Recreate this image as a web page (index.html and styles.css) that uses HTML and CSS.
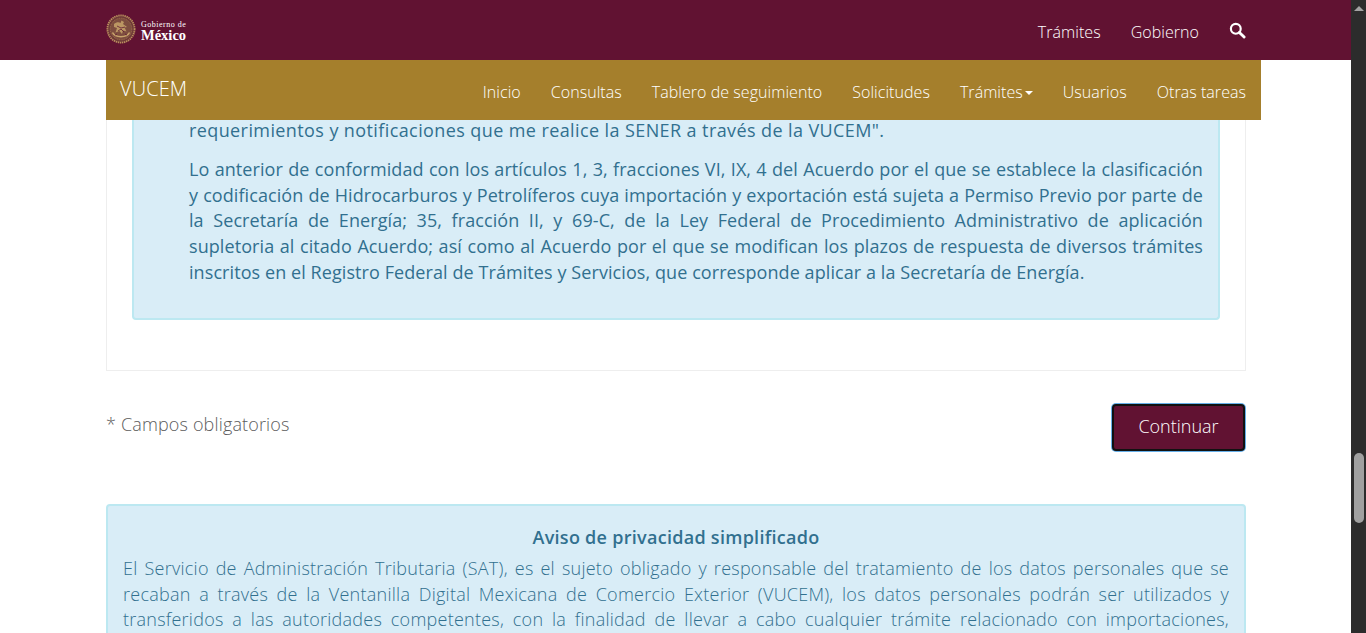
FILE: index.html
```html
<!DOCTYPE html>
<html lang="es">
<head>
<meta charset="utf-8">
<title>VUCEM</title>
<link rel="stylesheet" href="styles.css">
</head>
<body>
<div class="window">
  <div class="viewport">
    <header class="topbar">
      <div class="container topbar-row">
        <a class="logo" href="#">
          <svg class="seal" viewBox="0 0 30 30" width="30" height="30" aria-hidden="true">
            <circle cx="15" cy="15" r="13.6" fill="#6f3a38" stroke="#b98f5e" stroke-width="1.8" stroke-dasharray="1.4 0.7"/>
            <circle cx="15" cy="15" r="10.8" fill="#7d4d3f" stroke="#a98050" stroke-width="0.7" stroke-dasharray="1 0.8"/>
            <path d="M8 10c2-2 5-2.500 6.500-1l1-2.500 2.500 1.500-1 2 4 3-2.500.5 2 4-3.500-1-1 3.500-2.500-3-4 1.500 1.500-4.500-3-1z" fill="#bb9663"/>
            <path d="M6.500 18.500c2.500 5.500 14.500 5.500 17 0" fill="none" stroke="#c9a46c" stroke-width="1.500"/>
            <path d="M11 12l4 2 4-1M12 17l3-2 3 3M9 21l2-1M19 20l2 1" fill="none" stroke="#5f1a33" stroke-width="0.8"/>
          </svg>
          <span class="logo-text"><span class="logo-small">Gobierno de</span><span class="logo-big">México</span></span>
        </a>
        <nav class="toplinks">
          <a href="#">Trámites</a>
          <a href="#">Gobierno</a>
          <a href="#" class="search" aria-label="Buscar">
            <svg viewBox="0 0 18 18" width="17" height="17"><circle cx="7.2" cy="7.2" r="5.2" fill="none" stroke="#fff" stroke-width="2.3"/><path d="M11 11l5 5" stroke="#fff" stroke-width="3" stroke-linecap="round"/></svg>
          </a>
        </nav>
      </div>
    </header>
    <div class="container">
      <nav class="subnav">
        <a class="brand" href="#">VUCEM</a>
        <ul class="menu">
          <li><a href="#">Inicio</a></li>
          <li><a href="#">Consultas</a></li>
          <li><a href="#">Tablero de seguimiento</a></li>
          <li><a href="#">Solicitudes</a></li>
          <li><a href="#">Trámites<span class="caret"></span></a></li>
          <li><a href="#">Usuarios</a></li>
          <li><a href="#">Otras tareas</a></li>
        </ul>
      </nav>
      <section class="panel">
        <div class="alert alert-inner">
          <p>requerimientos y notificaciones que me realice la SENER a través de la VUCEM".</p>
          <p>Lo anterior de conformidad con los artículos 1, 3, fracciones VI, IX, 4 del Acuerdo por el que se establece la clasificación y codificación de Hidrocarburos y Petrolíferos cuya importación y exportación está sujeta a Permiso Previo por parte de la Secretaría de Energía; 35, fracción II, y 69-C, de la Ley Federal de Procedimiento Administrativo de aplicación supletoria al citado Acuerdo; así como al Acuerdo por el que se modifican los plazos de respuesta de diversos trámites inscritos en el Registro Federal de Trámites y Servicios, que corresponde aplicar a la Secretaría de Energía.</p>
        </div>
      </section>
      <div class="actions">
        <span class="required">* Campos obligatorios</span>
        <button class="btn" type="button">Continuar</button>
      </div>
      <section class="alert privacy">
        <h3>Aviso de privacidad simplificado</h3>
        <p>El Servicio de Administración Tributaria (SAT), es el sujeto obligado y responsable del tratamiento de los datos personales que se recaban a través de la Ventanilla Digital Mexicana de Comercio Exterior (VUCEM), los datos personales podrán ser utilizados y transferidos a las autoridades competentes, con la finalidad de llevar a cabo cualquier trámite relacionado con importaciones, exportaciones y demás operaciones de comercio exterior.</p>
      </section>
    </div>
  </div>
  <div class="scrollbar" aria-hidden="true">
    <span class="arrow"></span>
    <span class="thumb"></span>
  </div>
</div>
</body>
</html>
```

FILE: styles.css
```css
* { box-sizing: border-box; }
html, body { margin: 0; padding: 0; height: 633px; overflow: hidden; background: #fff; }
body { font-family: "Open Sans", "Noto Sans", sans-serif; font-size: 18px; line-height: 1.4286; color: #5c5c5c; }
a { color: inherit; text-decoration: none; }
.window { display: flex; height: 633px; }
.viewport { flex: 1; min-width: 0; height: 633px; overflow: hidden; }
.scrollbar { width: 15px; flex: none; background: #2c2c2c; display: flex; flex-direction: column; align-items: center; }
.arrow { margin-top: 6px; border-left: 5px solid transparent; border-right: 5px solid transparent; border-bottom: 5px solid #a3a3a3; }
.thumb { margin-top: 442px; width: 10px; height: 70px; border-radius: 5px; background: #a0a0a0; }
.container { width: 1140px; margin-left: 106px; }
.topbar { height: 60px; background: #611232; color: #fff; }
.topbar-row { display: flex; align-items: center; justify-content: space-between; height: 60px; }
.logo { display: flex; align-items: center; gap: 5px; margin-top: -2px; }
.seal { display: block; }
.logo-text { display: flex; flex-direction: column; padding-top: 3px; font-family: "Liberation Serif", serif; color: #fff; line-height: 1; }
.logo-small { font-size: 8px; font-weight: 400; letter-spacing: 0.5px; line-height: 8px; }
.logo-big { font-size: 14.500px; font-weight: 700; line-height: 12px; }
.toplinks { display: flex; align-items: center; gap: 30px; font-size: 16px; font-weight: 300; letter-spacing: 0.05px; padding-top: 4px; }
.search { display: flex; margin-top: -3px; }
.subnav { display: flex; align-items: center; justify-content: space-between; height: 60px; margin-right: -15px; padding: 0 15px 0 14px; background: #a57f2c; color: #fff; }
.brand { font-size: 20px; line-height: 28px; font-weight: 300; margin-top: -3px; letter-spacing: 0.1px; }
.menu { display: flex; gap: 30px; margin: 4px 0 0; padding: 0; list-style: none; font-size: 16px; font-weight: 300; letter-spacing: 0.05px; }
.caret { display: inline-block; margin-left: 2px; vertical-align: middle; border-top: 4px solid #fff; border-left: 4px solid transparent; border-right: 4px solid transparent; }
.panel { border: 1px solid #eee; border-top: 0; padding: 0 25px 50px; height: 251px; }
.alert { background: #d9edf7; border: 2px solid #bce8f1; border-radius: 4px; color: #31708f; }
.alert-inner { display: flow-root; border-top: 0; border-top-left-radius: 0; border-top-right-radius: 0; height: 200px; padding: 0 15px 0 55px; text-align: justify; }
.alert-inner p { margin: 0 0 13px; font-size: 18px; letter-spacing: 0.08px; line-height: 25.8px; }
.alert-inner p:first-child { margin-top: -2px; letter-spacing: 0.4px; }
.actions { display: flex; justify-content: space-between; align-items: flex-start; margin-top: 32px; }
.required { font-weight: 300; font-size: 18px; line-height: 26px; margin-top: 8px; letter-spacing: 0.15px; }
.btn { width: 133px; height: 47px; margin: 1px; font-family: inherit; font-size: 18px; font-weight: 300; color: #fff; background: #611232; border: 2px solid #111; border-radius: 4px; box-shadow: 0 0 0 1px #66afe9; padding: 0 0 3px; }
.privacy { margin-top: 52px; padding: 18px 15px; text-align: justify; }
.privacy h3 { margin: 0; font-size: 18px; line-height: 26px; font-weight: 600; text-align: center; letter-spacing: 0.28px; }
.privacy p { margin: 6px 0 0; font-size: 18px; font-weight: 300; line-height: 25.7px; letter-spacing: 0.25px; }
```
